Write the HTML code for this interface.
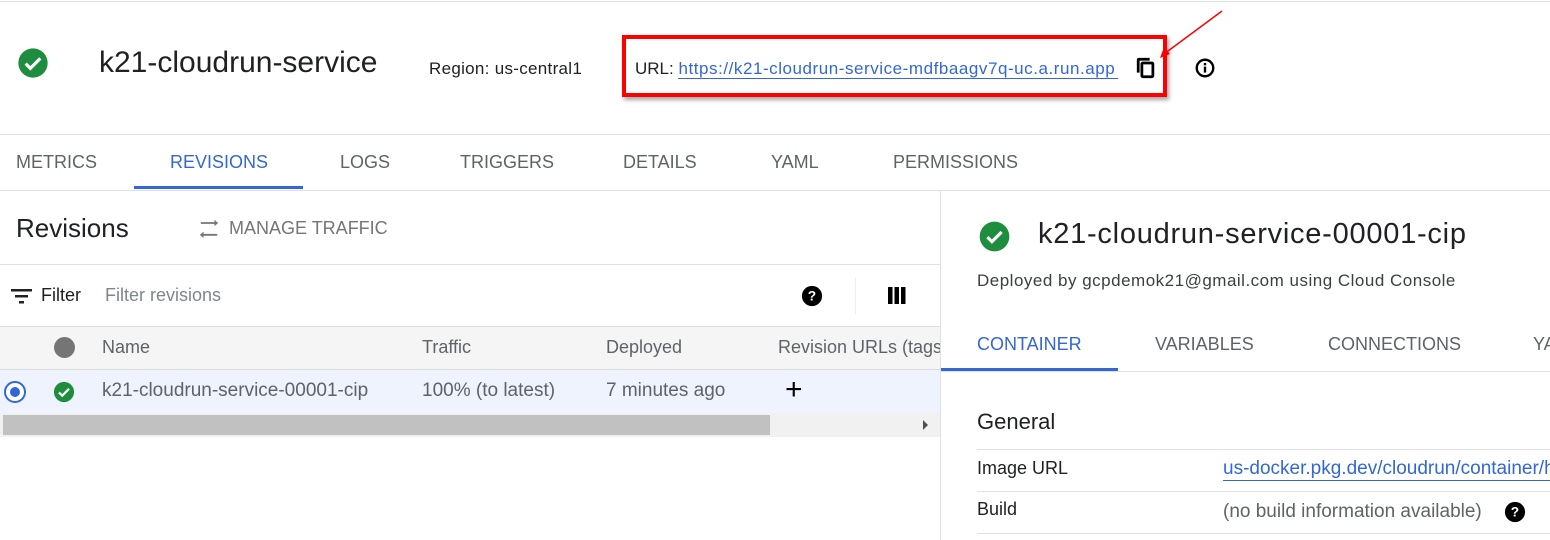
<!DOCTYPE html>
<html><head><style>
body{margin:0;width:1550px;height:540px;overflow:hidden;background:#fff;font-family:"Liberation Sans",sans-serif;position:relative}
.a{position:absolute;white-space:nowrap}
.l{position:absolute;background:#e0e0e0;height:1px}
.tab{position:absolute;font-size:18px;color:#5f6368;top:152px}
</style></head><body>
<div class="l" style="top:1px;left:0;width:1550px"></div>
<svg class="a" style="left:17px;top:47px" width="32" height="32" viewBox="0 0 24 24"><circle cx="12" cy="12" r="11" fill="#1e8e3e"/><path d="M6.5 12.5l3.5 3.5 7.5-7.5" stroke="#fff" stroke-width="2.4" fill="none"/></svg>
<div class="a" style="left:99px;top:46px;font-size:30px;color:#202124">k21-cloudrun-service</div>
<div class="a" style="left:429px;top:59px;font-size:17px;color:#202124;letter-spacing:0.3px">Region: us-central1</div>
<div class="a" style="left:622px;top:35px;width:537px;height:54px;border:4px solid #f00;box-shadow:2px 3px 4px rgba(0,0,0,.35)"></div>
<div class="a" style="left:635px;top:59px;font-size:17px;color:#202124">URL: <span style="color:#3367d6;border-bottom:1px solid #3367d6;padding-right:3px;letter-spacing:0.55px">https://k21-cloudrun-service-mdfbaagv7q-uc.a.run.app</span></div>
<svg class="a" style="left:1135px;top:57px" width="22" height="22" viewBox="0 0 24 24"><path d="M16 1H4c-1.1 0-2 .9-2 2v14h3V4h11V1z" fill="#000"/><rect x="7.5" y="6.5" width="12" height="15" rx="1" fill="none" stroke="#000" stroke-width="3"/></svg>
<svg class="a" style="left:1194px;top:57px" width="22" height="22" viewBox="0 0 24 24"><circle cx="12" cy="12" r="9" stroke="#000" stroke-width="2.6" fill="none"/><rect x="10.7" y="10.5" width="2.6" height="6.5"/><rect x="10.7" y="6.5" width="2.6" height="2.6"/></svg>
<svg class="a" style="left:1150px;top:8px" width="80" height="55"><line x1="72" y1="3" x2="14" y2="46" stroke="#f00" stroke-width="1.5"/><path d="M10 50l4-11 6 7z" fill="#f00"/></svg>
<div class="l" style="top:134px;left:0;width:1550px"></div>
<div class="tab" style="left:16px">METRICS</div>
<div class="tab" style="left:170px;color:#3367d6">REVISIONS</div>
<div class="a" style="left:134px;top:186px;width:169px;height:3px;background:#3367d6"></div>
<div class="tab" style="left:340px">LOGS</div>
<div class="tab" style="left:460px">TRIGGERS</div>
<div class="tab" style="left:623px">DETAILS</div>
<div class="tab" style="left:771px">YAML</div>
<div class="tab" style="left:893px">PERMISSIONS</div>
<div class="l" style="top:190px;left:0;width:1550px"></div>
<div class="a" style="left:940px;top:190px;width:1px;height:350px;background:#e0e0e0"></div>
<div class="a" style="left:16px;top:213px;font-size:26px;color:#202124">Revisions</div>
<svg class="a" style="left:198px;top:218px" width="22" height="20" viewBox="0 0 24 22"><path d="M6 15l-4 3.5 4 3.5v-2.5h15v-2H6zM22 5.5L18 2v2.5H3v2h15V9z" fill="#757575"/></svg>
<div class="a" style="left:229px;top:218px;font-size:18px;color:#757575">MANAGE TRAFFIC</div>
<div class="l" style="top:264px;left:0;width:940px"></div>
<svg class="a" style="left:11px;top:287px" width="22" height="18" viewBox="0 0 22 18"><rect x="0" y="2" width="21" height="2.5" fill="#202124"/><rect x="4" y="8" width="13" height="2.5" fill="#202124"/><rect x="8" y="14" width="5" height="2.5" fill="#202124"/></svg>
<div class="a" style="left:41px;top:285px;font-size:18px;color:#202124">Filter</div>
<div class="a" style="left:105px;top:285px;font-size:18px;color:#80868b">Filter revisions</div>
<svg class="a" style="left:801px;top:285px" width="22" height="22" viewBox="0 0 24 24"><circle cx="12" cy="12" r="11" fill="#000"/><text x="12" y="17" font-size="15" font-weight="bold" fill="#fff" text-anchor="middle" font-family="Liberation Sans">?</text></svg>
<div class="a" style="left:855px;top:278px;width:1px;height:36px;background:#eee"></div>
<svg class="a" style="left:887px;top:287px" width="20" height="18"><rect x="1" y="0" width="4.5" height="17"/><rect x="7.5" y="0" width="4.5" height="17"/><rect x="14" y="0" width="4.5" height="17"/></svg>
<div class="a" style="left:0;top:326px;width:940px;height:43px;background:#f5f5f5;border-top:1px solid #e0e0e0"></div>
<div class="a" style="left:54px;top:337px;width:21px;height:21px;border-radius:50%;background:#757575"></div>
<div class="a" style="left:102px;top:337px;font-size:18px;color:#5f6368">Name</div>
<div class="a" style="left:422px;top:337px;font-size:18px;color:#5f6368">Traffic</div>
<div class="a" style="left:606px;top:337px;font-size:18px;color:#5f6368">Deployed</div>
<div class="a" style="left:778px;top:337px;font-size:18px;color:#5f6368;width:162px;overflow:hidden">Revision URLs (tags)</div>
<div class="a" style="left:0;top:369px;width:940px;height:43px;background:#eef3fd;border-top:1px solid #dadce0;border-bottom:1px solid #dadce0"></div>
<div class="a" style="left:4px;top:381px;width:18px;height:18px;border-radius:50%;border:2px solid #3367d6;background:#fff"></div>
<div class="a" style="left:10px;top:387px;width:10px;height:10px;border-radius:50%;background:#3367d6"></div>
<svg class="a" style="left:53px;top:381px" width="22" height="22" viewBox="0 0 24 24"><circle cx="12" cy="12" r="11" fill="#1e8e3e"/><path d="M6.5 12.5l3.5 3.5 7.5-7.5" stroke="#fff" stroke-width="2.4" fill="none"/></svg>
<div class="a" style="left:102px;top:380px;font-size:19px;color:#5f6368">k21-cloudrun-service-00001-cip</div>
<div class="a" style="left:422px;top:380px;font-size:19px;color:#5f6368">100% (to latest)</div>
<div class="a" style="left:606px;top:380px;font-size:19px;color:#5f6368">7 minutes ago</div>
<div class="a" style="left:785px;top:373px;font-size:30px;color:#000">+</div>
<div class="a" style="left:0;top:413px;width:940px;height:24px;background:#f1f1f1"></div>
<div class="a" style="left:3px;top:415px;width:767px;height:20px;background:#c1c1c1"></div>
<div class="a" style="left:923px;top:420px;width:0;height:0;border-left:5px solid #505050;border-top:5px solid transparent;border-bottom:5px solid transparent"></div>
<svg class="a" style="left:979px;top:221px" width="31" height="31" viewBox="0 0 24 24"><circle cx="12" cy="12" r="11.5" fill="#1e8e3e"/><path d="M6.5 12.5l3.5 3.5 7.5-7.5" stroke="#fff" stroke-width="2.4" fill="none"/></svg>
<div class="a" style="left:1038px;top:218px;font-size:29px;color:#202124;letter-spacing:0.75px">k21-cloudrun-service-00001-cip</div>
<div class="a" style="left:977px;top:271px;font-size:17px;color:#3c4043;letter-spacing:0.5px">Deployed by gcpdemok21@gmail.com using Cloud Console</div>
<div class="tab" style="left:977px;top:334px;color:#3367d6">CONTAINER</div>
<div class="tab" style="left:1155px;top:334px">VARIABLES</div>
<div class="tab" style="left:1328px;top:334px">CONNECTIONS</div>
<div class="tab" style="left:1533px;top:334px">YAML</div>
<div class="l" style="top:371px;left:941px;width:609px"></div>
<div class="a" style="left:941px;top:368px;width:177px;height:3px;background:#3367d6"></div>
<div class="a" style="left:977px;top:409px;font-size:22px;color:#202124">General</div>
<div class="l" style="top:449px;left:977px;width:573px"></div>
<div class="a" style="left:977px;top:458px;font-size:18px;color:#202124">Image URL</div>
<div class="a" style="left:1223px;top:458px;font-size:19px;color:#3367d6;border-bottom:1px solid #3367d6">us-docker.pkg.dev/cloudrun/container/hello</div>
<div class="l" style="top:491px;left:977px;width:573px"></div>
<div class="a" style="left:977px;top:499px;font-size:18px;color:#202124">Build</div>
<div class="a" style="left:1223px;top:501px;font-size:19px;color:#5f6368">(no build information available)</div>
<svg class="a" style="left:1504px;top:501px" width="22" height="22" viewBox="0 0 24 24"><circle cx="12" cy="12" r="11" fill="#000"/><text x="12" y="17" font-size="15" font-weight="bold" fill="#fff" text-anchor="middle" font-family="Liberation Sans">?</text></svg>
<div class="l" style="top:533px;left:977px;width:573px"></div>
</body></html>
